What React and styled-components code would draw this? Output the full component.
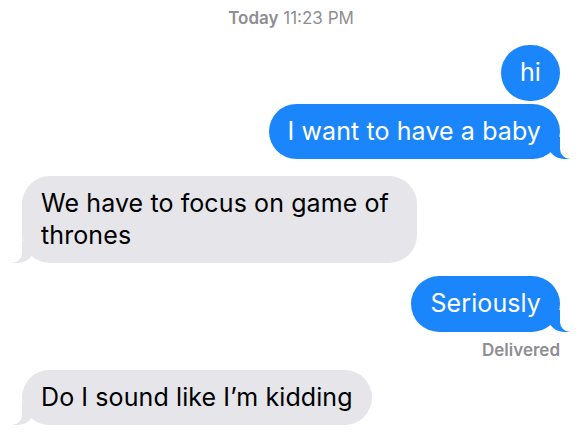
import { Fragment } from 'react';
import styled, { createGlobalStyle, css } from 'styled-components';

const GlobalStyle = createGlobalStyle`
  html, body {
    margin: 0;
    padding: 0;
    background: #ffffff;
  }
  body {
    font-family: Inter, "Liberation Sans", Arial, sans-serif;
    -webkit-font-smoothing: antialiased;
  }
`;

const BLUE = '#1b86fb';
const GRAY = '#e5e5ea';

const Thread = styled.div`
  display: flex;
  flex-direction: column;
  padding: 8px 22px 0 22px;
  width: 582px;
  height: 435px;
  box-sizing: border-box;
  overflow: hidden;
`;

const Stamp = styled.div`
  align-self: center;
  font-size: 17px;
  line-height: 21px;
  color: #8e8e93;
  margin-bottom: 16px;

  b {
    font-weight: 600;
  }
`;

const tailRight = css`
  &::before {
    content: '';
    position: absolute;
    bottom: 0;
    right: -10px;
    width: 22px;
    height: 22px;
    background: ${BLUE};
    border-bottom-left-radius: 16px 15px;
  }
  &::after {
    content: '';
    position: absolute;
    bottom: 0;
    right: -14px;
    width: 14px;
    height: 22px;
    background: #ffffff;
    border-bottom-left-radius: 10px;
  }
`;

const tailLeft = css`
  &::before {
    content: '';
    position: absolute;
    bottom: 0;
    left: -10px;
    width: 22px;
    height: 22px;
    background: ${GRAY};
    border-bottom-right-radius: 16px 15px;
  }
  &::after {
    content: '';
    position: absolute;
    bottom: 0;
    left: -14px;
    width: 14px;
    height: 22px;
    background: #ffffff;
    border-bottom-right-radius: 10px;
  }
`;

const Bubble = styled.div`
  position: relative;
  box-sizing: border-box;
  max-width: 395px;
  padding: 12px 19px;
  border-radius: 28px;
  font-size: 25px;
  line-height: 31.5px;
  letter-spacing: 0.1px;
  align-self: ${({ $mine }) => ($mine ? 'flex-end' : 'flex-start')};
  background: ${({ $mine }) => ($mine ? BLUE : GRAY)};
  color: ${({ $mine }) => ($mine ? '#ffffff' : '#000000')};
  margin-top: ${({ $gap }) => $gap}px;

  ${({ $tail, $mine }) => $tail && ($mine ? tailRight : tailLeft)}
`;

const Text = styled.span`
  position: relative;
  z-index: 2;
`;

const Status = styled.div`
  align-self: flex-end;
  font-size: 17px;
  line-height: 20px;
  font-weight: 600;
  color: #8e8e93;
  margin-top: 8px;
`;

const messages = [
  { text: 'hi', mine: true, gap: 0, tail: false },
  { text: 'I want to have a baby', mine: true, gap: 3, tail: true },
  { text: 'We have to focus on game of thrones', mine: false, gap: 17, tail: true },
  { text: 'Seriously', mine: true, gap: 13, tail: true, status: 'Delivered' },
  { text: 'Do I sound like I\u2019m kidding', mine: false, gap: 10, tail: true },
];

export default function App() {
  return (
    <>
      <GlobalStyle />
      <Thread>
        <Stamp>
          <b>Today</b> 11:23 PM
        </Stamp>
        {messages.map((m) => (
          <Fragment key={m.text}>
            <Bubble $mine={m.mine} $gap={m.gap} $tail={m.tail}>
              <Text>{m.text}</Text>
            </Bubble>
            {m.status && <Status>{m.status}</Status>}
          </Fragment>
        ))}
      </Thread>
    </>
  );
}
